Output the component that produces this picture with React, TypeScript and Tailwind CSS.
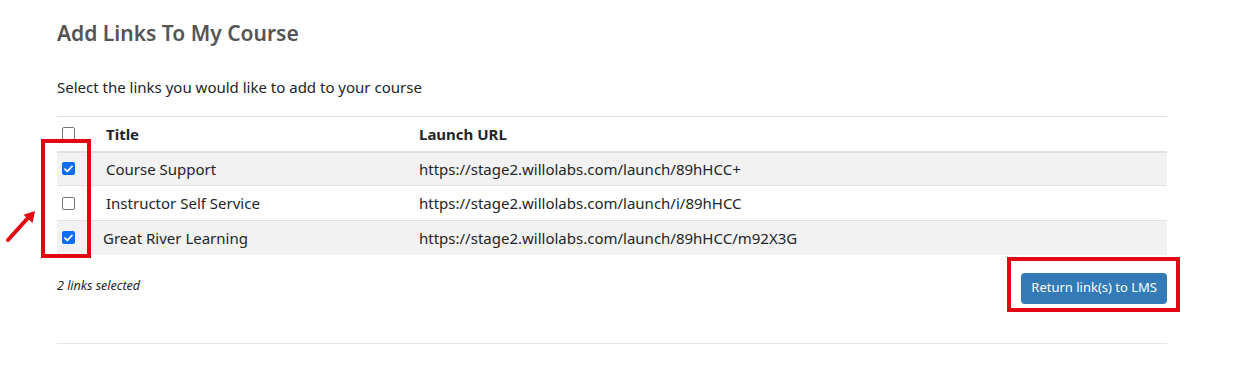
const links = [
  { title: 'Course Support', url: 'https://stage2.willolabs.com/launch/89hHCC+', checked: true },
  { title: 'Instructor Self Service', url: 'https://stage2.willolabs.com/launch/i/89hHCC', checked: false },
  { title: 'Great River Learning', url: 'https://stage2.willolabs.com/launch/89hHCC/m92X3G', checked: true, nudge: true },
];

function Box({ checked }: { checked: boolean }) {
  if (checked) {
    return (
      <span className="flex h-[13px] w-[13px] items-center justify-center rounded-[2px] bg-[#0b6cf5]">
        <svg width="9" height="8" viewBox="0 0 9 8">
          <path d="M1 4.2 L3.4 6.4 L8 1.4" fill="none" stroke="white" strokeWidth="1.8" strokeLinecap="round" strokeLinejoin="round" />
        </svg>
      </span>
    );
  }
  return <span className="block h-[13px] w-[13px] rounded-[2px] border border-[#767676] bg-white" />;
}

export default function App() {
  const selected = links.filter(l => l.checked).length;

  return (
    <div className="relative h-[381px] w-[1253px] bg-white font-['Noto_Sans',sans-serif] text-[#212529]">
      <div className="ml-[57px] w-[1110px] pt-[19px]">
        <h1 className="text-[21px] font-semibold leading-[28px] text-[#555]">Add Links To My Course</h1>
        <p className="mt-[30px] text-[15px] leading-[20px]">Select the links you would like to add to your course</p>

        <table className="mt-[19px] w-full border-collapse text-[15px]">
          <thead>
            <tr className="h-[35px] border-t border-b-2 border-[#dee2e6]">
              <th className="w-[41px] pl-[5px] text-left align-middle">
                <Box checked={false} />
              </th>
              <th className="w-[313px] pl-[8px] text-left font-bold">Title</th>
              <th className="pl-[8px] text-left font-bold">Launch URL</th>
            </tr>
          </thead>
          <tbody>
            {links.map((l, i) => (
              <tr key={l.url} className={`border-b border-[#dee2e6] last:border-b-0 ${i === 1 ? 'h-[35px]' : 'h-[34px]'} ${i % 2 === 0 ? 'bg-[#f2f2f2]' : 'bg-white'}`}>
                <td className="pl-[5px] align-middle">
                  <Box checked={l.checked} />
                </td>
                <td className={l.nudge ? 'pl-[5px]' : 'pl-[8px]'}>{l.title}</td>
                <td className="pl-[8px]">{l.url}</td>
              </tr>
            ))}
          </tbody>
        </table>

        <div className="mt-[18px] flex items-start justify-between">
          <p className="mt-[4px] text-[12.5px] italic">{selected} links selected</p>
          <button className="h-[31px] rounded-[4px] bg-[#337ab7] px-[10px] text-[13px] text-white">
            Return link(s) to LMS
          </button>
        </div>

        <hr className="mt-[39px] border-t border-[#e5e5e5]" />
      </div>

      {/* annotation marks */}
      <div className="absolute left-[41px] top-[139px] h-[119px] w-[50px] border-4 border-[#e30613]" />
      <div className="absolute left-[1007px] top-[257px] h-[55px] w-[173px] border-4 border-[#e30613]" />
      <svg className="absolute left-0 top-[205px]" width="40" height="40" viewBox="0 0 40 40">
        <path d="M8 35 L27 14" stroke="#e30613" strokeWidth="4" strokeLinecap="round" />
        <path d="M35 6 L32.5 18 L23.5 9.8 Z" fill="#e30613" />
      </svg>
    </div>
  );
}
